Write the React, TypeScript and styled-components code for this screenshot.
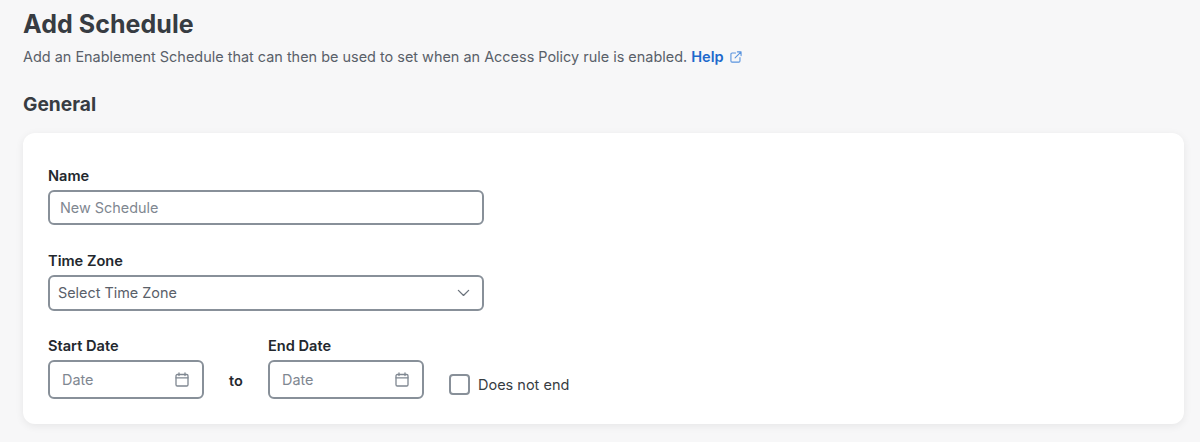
import React, { FC } from 'react';
import styled, { createGlobalStyle } from 'styled-components';

const GlobalStyle = createGlobalStyle`
    html, body { margin: 0; padding: 0; background: #f7f7f8; }
    body { font-family: 'Inter', 'Liberation Sans', sans-serif; overflow: hidden; }
`;

const Page = styled.div`
    width: 1200px;
    height: 442px;
    box-sizing: border-box;
    padding: 8px 16px 0 23px;
`;

const Title = styled.h1`
    margin: 0;
    font: 700 25px/32px 'Inter', sans-serif;
    letter-spacing: 0.05px;
    color: #373c42;
`;

const Subtitle = styled.p`
    margin: 8px 0 0;
    font: 400 14.45px/18px 'Inter', sans-serif;
    color: #596069;
    display: flex;
    align-items: center;
`;

const HelpLink = styled.a`
    margin-left: 4px;
    font-weight: 600;
    font-size: 14.6px;
    color: #1d69cc;
    text-decoration: none;
    display: inline-flex;
    align-items: center;
    gap: 6px;
`;

const SectionTitle = styled.h2`
    margin: 26px 0 0;
    font: 700 19.2px/24px 'Inter', sans-serif;
    color: #373c42;
`;

const Card = styled.section`
    margin-top: 17px;
    height: 291px;
    box-sizing: border-box;
    padding: 34px 25px 0;
    background: #fff;
    border-radius: 12px;
    box-shadow: 0 2px 8px rgba(0, 0, 0, 0.07);
    display: flex;
    flex-direction: column;
    gap: 26.5px;
`;

const Field = styled.div`
    display: flex;
    flex-direction: column;
    gap: 5px;
`;

const Label = styled.label`
    font: 600 14.6px/18px 'Inter', sans-serif;
    color: #23282e;
`;

const Box = styled.div<{ $width: number; $height: number; $left: number; $right: number }>`
    width: ${p => p.$width}px;
    height: ${p => p.$height}px;
    box-sizing: border-box;
    padding: 0 ${p => p.$right}px 0 ${p => p.$left}px;
    border: 2px solid #889099;
    border-radius: 6px;
    display: flex;
    align-items: center;
    justify-content: space-between;
    font: 400 14.4px/18px 'Inter', sans-serif;
`;

const Placeholder = styled.span`
    color: #7f8791;
`;

const SelectText = styled.span`
    color: #596069;
`;

const DateRow = styled.div`
    display: flex;
    align-items: flex-start;
`;

const ToText = styled.span`
    width: 64px;
    margin-top: 35px;
    text-align: center;
    font: 600 14.5px/18px 'Inter', sans-serif;
    color: #23282e;
`;

const CheckField = styled.label`
    margin: 37px 0 0 25px;
    display: flex;
    align-items: center;
    gap: 8px;
    font: 400 14.5px/20px 'Inter', sans-serif;
    color: #373c42;
`;

const CheckBox = styled.span`
    width: 21px;
    height: 21px;
    box-sizing: border-box;
    border: 2px solid #889099;
    border-radius: 4px;
`;

const Icon = styled.svg`
    display: block;
    flex: none;
    fill: none;
    stroke-linecap: round;
    stroke-linejoin: round;
`;

const ExternalIcon: FC = () => (
    <Icon width="12" height="12" viewBox="0 0 13 13" stroke="#5a94de" strokeWidth="1.2">
        <path d="M6 2.2H2.2a1.2 1.2 0 0 0-1.2 1.2v7.4A1.2 1.2 0 0 0 2.2 12h7.4a1.2 1.2 0 0 0 1.2-1.2V7" />
        <path d="M5.5 7.5 12 1M8 1h4v4" />
    </Icon>
);

const ChevronIcon: FC = () => (
    <Icon width="13" height="8" viewBox="0 0 14 8" stroke="#6b737c" strokeWidth="1.4">
        <path d="M1.5 1.2 7 6.6l5.500-5.400" />
    </Icon>
);

const CalendarIcon: FC = () => (
    <Icon width="14" height="15" viewBox="0 0 14 15" stroke="#7f8791" strokeWidth="1.3">
        <rect x="1" y="2.500" width="12" height="11.500" rx="1.300" />
        <path d="M1 5.800h12M4 1v2.500M10 1v2.500" />
    </Icon>
);

const DateField: FC<{ label: string }> = ({ label }) => (
    <Field>
        <Label>{label}</Label>
        <Box $width={156} $height={39} $left={12} $right={13}>
            <Placeholder>Date</Placeholder>
            <CalendarIcon />
        </Box>
    </Field>
);

export default function App() {
    return (
        <Page>
            <GlobalStyle />
            <Title>Add Schedule</Title>
            <Subtitle>
                Add an Enablement Schedule that can then be used to set when an Access Policy rule is enabled.
                <HelpLink href="#">Help <ExternalIcon /></HelpLink>
            </Subtitle>
            <SectionTitle>General</SectionTitle>
            <Card>
                <Field>
                    <Label>Name</Label>
                    <Box $width={436} $height={35} $left={10} $right={10}>
                        <Placeholder>New Schedule</Placeholder>
                    </Box>
                </Field>
                <Field>
                    <Label>Time Zone</Label>
                    <Box $width={436} $height={36} $left={8} $right={12}>
                        <SelectText>Select Time Zone</SelectText>
                        <ChevronIcon />
                    </Box>
                </Field>
                <DateRow>
                    <DateField label="Start Date" />
                    <ToText>to</ToText>
                    <DateField label="End Date" />
                    <CheckField>
                        <CheckBox />
                        Does not end
                    </CheckField>
                </DateRow>
            </Card>
        </Page>
    );
}
